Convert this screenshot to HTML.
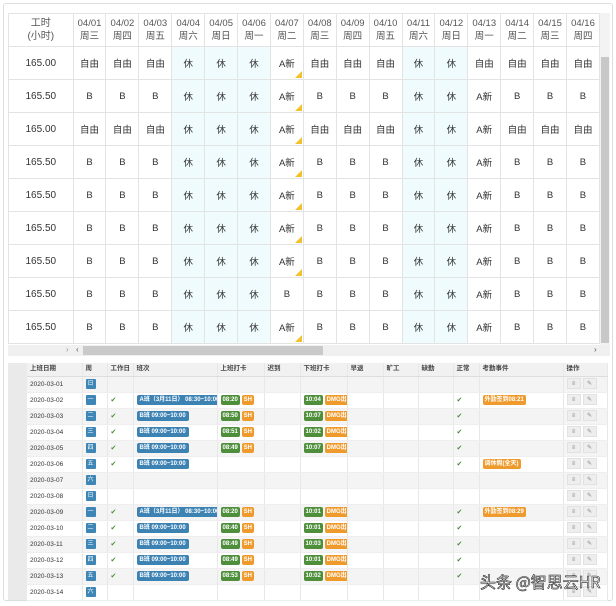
<!DOCTYPE html>
<html><head><meta charset="utf-8">
<style>
*{margin:0;padding:0;box-sizing:border-box}
body{width:616px;height:606px;background:#fff;font-family:"Liberation Sans","Noto Sans CJK SC",sans-serif;color:#333;position:relative;overflow:hidden}
.outer{position:absolute;left:3px;top:3px;width:610px;height:598px;border:1px solid #ddd;border-radius:3px}
.top{position:absolute;left:8px;top:13px;width:592px;height:332px;overflow:hidden}
table.t{border-collapse:collapse;table-layout:fixed;font-size:9.5px}
table.t td{border:1px solid #e3e3e3;text-align:center;height:33px;width:33px;position:relative;color:#333}
table.t td:first-child{width:65px;font-size:10px}
table.t tr:first-child td{line-height:13px;color:#555;background:#fff}
table.t td.w{background:#effbfd}
.tri{position:absolute;right:1px;bottom:1px;width:0;height:0;border-left:7px solid transparent;border-bottom:7px solid #f2c22c}
.vs{position:absolute;left:600px;top:13px;width:10px;height:332px;background:#f3f3f3}
.vs .th{position:absolute;left:1px;top:44px;width:8px;height:286px;background:#c8c8c8}
.hs{position:absolute;left:8px;top:345px;width:602px;height:11px;background:#f0f0f0}
.hs .th{position:absolute;left:75px;top:1px;width:240px;height:9px;background:#c9c9c9}
.bot{position:absolute;left:8px;top:363px;width:599px;height:237px;background:#eaeaea}
table.b{position:absolute;left:19px;top:0;width:580px;border-collapse:collapse;table-layout:fixed;font-size:6.5px;background:#fff}
table.b td{height:16px;line-height:15px;border-right:1px solid #e8e8e8;border-bottom:1px solid #eee;padding-left:3px;white-space:nowrap;overflow:hidden;vertical-align:middle}
table.b tr.h td{height:13px;line-height:12px;background:#f1f1f1;font-weight:bold;color:#444;border-bottom:1px solid #ddd}
table.b tr.g td{background:#f4f4f4}
table.b span{vertical-align:middle}
.wk{display:inline-block;width:10px;height:10px;background:#3e86b5;color:#fff;font-size:6px;text-align:center;line-height:10px;border-radius:1px}
.bl{display:inline-block;background:#3c82b3;color:#fff;padding:0 3px;border-radius:2px;line-height:10px;font-size:6px;font-weight:bold}
.gr{display:inline-block;background:#4f8f3c;color:#fff;padding:0 2px;border-radius:2px;line-height:10px;font-size:6px;font-weight:bold}
.or{display:inline-block;background:#ef9a2c;color:#fff;padding:0 2px;border-radius:2px;line-height:10px;font-size:6px;font-weight:bold}
.ok{color:#4f8f3c;font-size:7px}
.btn{display:inline-block;width:14px;height:11px;background:#eee;border:1px solid #e2e2e2;margin-right:2px;font-size:6px;text-align:center;line-height:10px;color:#888}
.wm{position:absolute;left:480px;top:569px;font-size:16px;color:#fff;-webkit-text-stroke:0.6px #222;font-family:"Noto Sans CJK SC",sans-serif}
</style></head><body>
<div class="outer"></div>
<div class="top"><table class="t">
<tr><td>工时<br>(小时)</td><td>04/01<br>周三</td><td>04/02<br>周四</td><td>04/03<br>周五</td><td>04/04<br>周六</td><td>04/05<br>周日</td><td>04/06<br>周一</td><td>04/07<br>周二</td><td>04/08<br>周三</td><td>04/09<br>周四</td><td>04/10<br>周五</td><td>04/11<br>周六</td><td>04/12<br>周日</td><td>04/13<br>周一</td><td>04/14<br>周二</td><td>04/15<br>周三</td><td>04/16<br>周四</td></tr>
<tr><td>165.00</td><td>自由</td><td>自由</td><td>自由</td><td class="w">休</td><td class="w">休</td><td class="w">休</td><td>A新<span class="tri"></span></td><td>自由</td><td>自由</td><td>自由</td><td class="w">休</td><td class="w">休</td><td>自由</td><td>自由</td><td>自由</td><td>自由</td></tr>
<tr><td>165.50</td><td>B</td><td>B</td><td>B</td><td class="w">休</td><td class="w">休</td><td class="w">休</td><td>A新<span class="tri"></span></td><td>B</td><td>B</td><td>B</td><td class="w">休</td><td class="w">休</td><td>A新</td><td>B</td><td>B</td><td>B</td></tr>
<tr><td>165.00</td><td>自由</td><td>自由</td><td>自由</td><td class="w">休</td><td class="w">休</td><td class="w">休</td><td>A新<span class="tri"></span></td><td>自由</td><td>自由</td><td>自由</td><td class="w">休</td><td class="w">休</td><td>A新</td><td>自由</td><td>自由</td><td>自由</td></tr>
<tr><td>165.50</td><td>B</td><td>B</td><td>B</td><td class="w">休</td><td class="w">休</td><td class="w">休</td><td>A新<span class="tri"></span></td><td>B</td><td>B</td><td>B</td><td class="w">休</td><td class="w">休</td><td>A新</td><td>B</td><td>B</td><td>B</td></tr>
<tr><td>165.50</td><td>B</td><td>B</td><td>B</td><td class="w">休</td><td class="w">休</td><td class="w">休</td><td>A新<span class="tri"></span></td><td>B</td><td>B</td><td>B</td><td class="w">休</td><td class="w">休</td><td>A新</td><td>B</td><td>B</td><td>B</td></tr>
<tr><td>165.50</td><td>B</td><td>B</td><td>B</td><td class="w">休</td><td class="w">休</td><td class="w">休</td><td>A新<span class="tri"></span></td><td>B</td><td>B</td><td>B</td><td class="w">休</td><td class="w">休</td><td>A新</td><td>B</td><td>B</td><td>B</td></tr>
<tr><td>165.50</td><td>B</td><td>B</td><td>B</td><td class="w">休</td><td class="w">休</td><td class="w">休</td><td>A新<span class="tri"></span></td><td>B</td><td>B</td><td>B</td><td class="w">休</td><td class="w">休</td><td>A新</td><td>B</td><td>B</td><td>B</td></tr>
<tr><td>165.50</td><td>B</td><td>B</td><td>B</td><td class="w">休</td><td class="w">休</td><td class="w">休</td><td>B</td><td>B</td><td>B</td><td>B</td><td class="w">休</td><td class="w">休</td><td>A新</td><td>B</td><td>B</td><td>B</td></tr>
<tr><td>165.50</td><td>B</td><td>B</td><td>B</td><td class="w">休</td><td class="w">休</td><td class="w">休</td><td>A新<span class="tri"></span></td><td>B</td><td>B</td><td>B</td><td class="w">休</td><td class="w">休</td><td>A新</td><td>B</td><td>B</td><td>B</td></tr>
</table></div>
<div class="vs"><div class="th"></div></div>
<div class="hs"><span style="position:absolute;left:58px;top:0;font-size:8px;color:#999">›</span><span style="position:absolute;left:68px;top:0;font-size:8px;color:#555">‹</span><div class="th"></div><span style="position:absolute;left:586px;top:0;font-size:8px;color:#555">›</span></div>
<div class="bot">
<table class="b">
<colgroup><col style="width:55px"><col style="width:25px"><col style="width:26px"><col style="width:84px"><col style="width:47px"><col style="width:36px"><col style="width:47px"><col style="width:36px"><col style="width:35px"><col style="width:35px"><col style="width:26px"><col style="width:84px"><col style="width:44px"></colgroup>
<tr class="h"><td>上班日期</td><td>周</td><td>工作日</td><td>班次</td><td>上班打卡</td><td>迟到</td><td>下班打卡</td><td>早退</td><td>旷工</td><td>缺勤</td><td>正常</td><td>考勤事件</td><td>操作</td></tr>
<tr class="g"><td>2020-03-01</td><td><span class="wk">日</span></td><td></td><td></td><td></td><td></td><td></td><td></td><td></td><td></td><td></td><td></td><td><span class="btn">≡</span><span class="btn">✎</span></td></tr>
<tr><td>2020-03-02</td><td><span class="wk">一</span></td><td class="ok">✔</td><td><span class="bl">A班（3月11日） 08:30~10:00</span></td><td><span class="gr">08:20</span> <span class="or">SH</span></td><td></td><td><span class="gr">10:04</span> <span class="or">DMG出</span></td><td></td><td></td><td></td><td class="ok">✔</td><td><span class="or">外勤签到08:21</span></td><td><span class="btn">≡</span><span class="btn">✎</span></td></tr>
<tr class="g"><td>2020-03-03</td><td><span class="wk">二</span></td><td class="ok">✔</td><td><span class="bl">B班 09:00~10:00</span></td><td><span class="gr">08:50</span> <span class="or">SH</span></td><td></td><td><span class="gr">10:07</span> <span class="or">DMG出</span></td><td></td><td></td><td></td><td class="ok">✔</td><td></td><td><span class="btn">≡</span><span class="btn">✎</span></td></tr>
<tr><td>2020-03-04</td><td><span class="wk">三</span></td><td class="ok">✔</td><td><span class="bl">B班 09:00~10:00</span></td><td><span class="gr">08:51</span> <span class="or">SH</span></td><td></td><td><span class="gr">10:02</span> <span class="or">DMG出</span></td><td></td><td></td><td></td><td class="ok">✔</td><td></td><td><span class="btn">≡</span><span class="btn">✎</span></td></tr>
<tr class="g"><td>2020-03-05</td><td><span class="wk">四</span></td><td class="ok">✔</td><td><span class="bl">B班 09:00~10:00</span></td><td><span class="gr">08:49</span> <span class="or">SH</span></td><td></td><td><span class="gr">10:07</span> <span class="or">DMG出</span></td><td></td><td></td><td></td><td class="ok">✔</td><td></td><td><span class="btn">≡</span><span class="btn">✎</span></td></tr>
<tr><td>2020-03-06</td><td><span class="wk">五</span></td><td class="ok">✔</td><td><span class="bl">B班 09:00~10:00</span></td><td></td><td></td><td></td><td></td><td></td><td></td><td class="ok">✔</td><td><span class="or">调休假(全天)</span></td><td><span class="btn">≡</span><span class="btn">✎</span></td></tr>
<tr class="g"><td>2020-03-07</td><td><span class="wk">六</span></td><td></td><td></td><td></td><td></td><td></td><td></td><td></td><td></td><td></td><td></td><td><span class="btn">≡</span><span class="btn">✎</span></td></tr>
<tr><td>2020-03-08</td><td><span class="wk">日</span></td><td></td><td></td><td></td><td></td><td></td><td></td><td></td><td></td><td></td><td></td><td><span class="btn">≡</span><span class="btn">✎</span></td></tr>
<tr class="g"><td>2020-03-09</td><td><span class="wk">一</span></td><td class="ok">✔</td><td><span class="bl">A班（3月11日） 08:30~10:00</span></td><td><span class="gr">08:20</span> <span class="or">SH</span></td><td></td><td><span class="gr">10:01</span> <span class="or">DMG出</span></td><td></td><td></td><td></td><td class="ok">✔</td><td><span class="or">外勤签到08:29</span></td><td><span class="btn">≡</span><span class="btn">✎</span></td></tr>
<tr><td>2020-03-10</td><td><span class="wk">二</span></td><td class="ok">✔</td><td><span class="bl">B班 09:00~10:00</span></td><td><span class="gr">08:40</span> <span class="or">SH</span></td><td></td><td><span class="gr">10:01</span> <span class="or">DMG出</span></td><td></td><td></td><td></td><td class="ok">✔</td><td></td><td><span class="btn">≡</span><span class="btn">✎</span></td></tr>
<tr class="g"><td>2020-03-11</td><td><span class="wk">三</span></td><td class="ok">✔</td><td><span class="bl">B班 09:00~10:00</span></td><td><span class="gr">08:49</span> <span class="or">SH</span></td><td></td><td><span class="gr">10:03</span> <span class="or">DMG出</span></td><td></td><td></td><td></td><td class="ok">✔</td><td></td><td><span class="btn">≡</span><span class="btn">✎</span></td></tr>
<tr><td>2020-03-12</td><td><span class="wk">四</span></td><td class="ok">✔</td><td><span class="bl">B班 09:00~10:00</span></td><td><span class="gr">08:49</span> <span class="or">SH</span></td><td></td><td><span class="gr">10:01</span> <span class="or">DMG出</span></td><td></td><td></td><td></td><td class="ok">✔</td><td></td><td><span class="btn">≡</span><span class="btn">✎</span></td></tr>
<tr class="g"><td>2020-03-13</td><td><span class="wk">五</span></td><td class="ok">✔</td><td><span class="bl">B班 09:00~10:00</span></td><td><span class="gr">08:53</span> <span class="or">SH</span></td><td></td><td><span class="gr">10:02</span> <span class="or">DMG出</span></td><td></td><td></td><td></td><td class="ok">✔</td><td></td><td><span class="btn">≡</span><span class="btn">✎</span></td></tr>
<tr><td>2020-03-14</td><td><span class="wk">六</span></td><td></td><td></td><td></td><td></td><td></td><td></td><td></td><td></td><td></td><td></td><td><span class="btn">≡</span><span class="btn">✎</span></td></tr>
</table>
</div>
<div class="wm">头条 @智思云HR</div>
</body></html>
